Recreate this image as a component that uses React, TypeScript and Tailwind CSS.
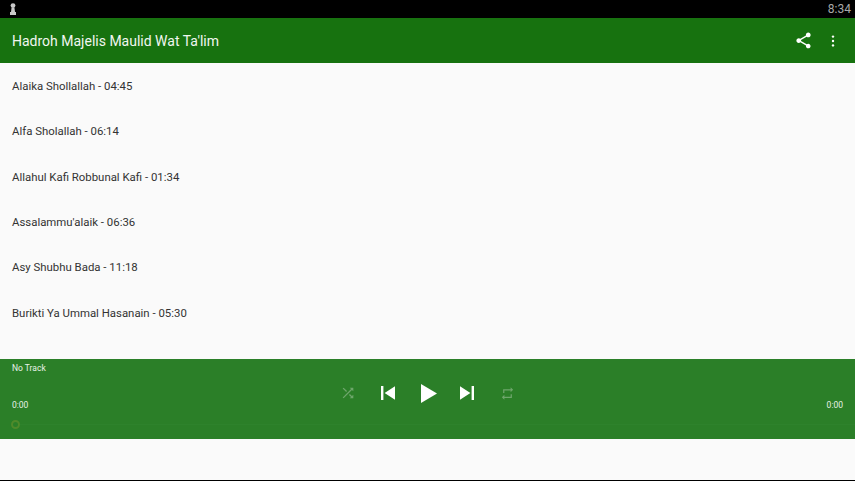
import type { ReactNode } from "react";

const tracks = [
  "Alaika Shollallah - 04:45",
  "Alfa Sholallah - 06:14",
  "Allahul Kafi Robbunal Kafi - 01:34",
  "Assalammu'alaik - 06:36",
  "Asy Shubhu Bada - 11:18",
  "Burikti Ya Ummal Hasanain - 05:30",
];

function Slot({ children }: { children: ReactNode }) {
  return <div className="flex w-[40px] items-center justify-center">{children}</div>;
}

export default function App() {
  return (
    <div className="flex h-[481px] w-[855px] flex-col overflow-hidden bg-[#fafafa] font-['Roboto',sans-serif]">
      {/* status bar */}
      <div className="flex h-[18px] shrink-0 items-center justify-between bg-black pl-[9px] pr-[4px]">
        <svg width="8" height="12" viewBox="0 0 8 12" fill="#c8c8c8">
          <circle cx="4" cy="2.6" r="2.4" />
          <path d="M2.6 4.5h2.8L6 9H2z" />
          <rect x="1" y="9" width="6" height="3" />
        </svg>
        <span className="text-[12px] leading-none text-[#a8a8a8]">8:34</span>
      </div>

      {/* toolbar */}
      <div className="flex h-[45px] shrink-0 items-center justify-between bg-[#17720f] pl-[12px] pr-[20px]">
        <span className="pt-[1px] text-[14px] text-[#f1f6f0]">Hadroh Majelis Maulid Wat Ta'lim</span>
        <div className="flex items-center gap-[18px] text-white">
          <svg width="19" height="19" viewBox="0 0 24 24" fill="currentColor">
            <path d="M18 16.08c-.76 0-1.44.3-1.96.77L8.91 12.7c.05-.23.09-.46.09-.7s-.04-.47-.09-.7l7.05-4.11c.54.5 1.25.81 2.04.81 1.66 0 3-1.34 3-3s-1.34-3-3-3-3 1.34-3 3c0 .24.04.47.09.7L8.04 9.81C7.5 9.31 6.79 9 6 9c-1.66 0-3 1.34-3 3s1.34 3 3 3c.79 0 1.5-.31 2.04-.81l7.12 4.16c-.05.21-.08.43-.08.65 0 1.61 1.31 2.92 2.92 2.92 1.61 0 2.92-1.31 2.92-2.92s-1.31-2.92-2.92-2.92z" />
          </svg>
          <svg width="4" height="12" viewBox="0 0 4 12" fill="currentColor">
            <circle cx="2" cy="1.6" r="1.2" />
            <circle cx="2" cy="6" r="1.2" />
            <circle cx="2" cy="10.4" r="1.2" />
          </svg>
        </div>
      </div>

      {/* track list */}
      <ul className="h-[296px] shrink-0 pt-[0.6px]">
        {tracks.map((track) => (
          <li key={track} className="flex h-[45.4px] items-center pl-[12px] text-[11.4px] text-[#333333]">
            {track}
          </li>
        ))}
      </ul>

      {/* player */}
      <div className="flex h-[80px] shrink-0 flex-col bg-[#2b7f28] text-[#e8f1e7]">
        <div className="pl-[12px] pt-[4px] text-[8.5px] leading-[11px]">No Track</div>
        <div className="flex h-[38px] items-center justify-between px-[12px] text-[8.5px]">
          <span className="w-[28px] self-end pb-[1px] leading-[12px]">0:00</span>
          <div className="flex items-center text-white">
            <Slot>
              <svg width="16" height="16" viewBox="0 0 24 24" fill="#6ea66b">
                <path d="M10.59 9.17L5.41 4 4 5.41l5.17 5.17 1.42-1.41zM14.5 4l2.04 2.04L4 18.59 5.41 20 17.96 7.46 20 9.5V4h-5.5zm.33 9.41l-1.41 1.41 3.13 3.13L14.5 20H20v-5.5l-2.04 2.04-3.13-3.13z" />
              </svg>
            </Slot>
            <Slot>
              <svg width="14" height="14" viewBox="0 0 14 14" fill="currentColor">
                <path d="M0 0h2.4v14H0zM3.6 7L14 .2v13.6z" />
              </svg>
            </Slot>
            <Slot>
              <svg width="16" height="19" viewBox="0 0 16 19" fill="currentColor" className="ml-[2px]">
                <path d="M0 0l16 9.5L0 19z" />
              </svg>
            </Slot>
            <Slot>
              <svg width="14" height="14" viewBox="0 0 14 14" fill="currentColor" className="mr-[1px]">
                <path d="M0 .2L10.4 7 0 13.8zM11.6 0H14v14h-2.4z" />
              </svg>
            </Slot>
            <Slot>
              <svg width="15" height="15" viewBox="0 0 24 24" fill="#6ea66b">
                <path d="M7 7h10v3l4-4-4-4v3H5v6h2V7zm10 10H7v-3l-4 4 4 4v-3h12v-6h-2v4z" />
              </svg>
            </Slot>
          </div>
          <span className="w-[28px] self-end pb-[1px] text-right leading-[12px]">0:00</span>
        </div>
        <div className="flex items-center pl-[11px] pt-[8px]">
          <span className="size-[9px] rounded-full border-[2px] border-[#4f8a2a]" />
          <span className="h-px flex-1 bg-[#2e822c]" />
        </div>
      </div>

      {/* bottom strip */}
      <div className="flex-1" />
      <div className="h-px shrink-0 bg-black" />
    </div>
  );
}
